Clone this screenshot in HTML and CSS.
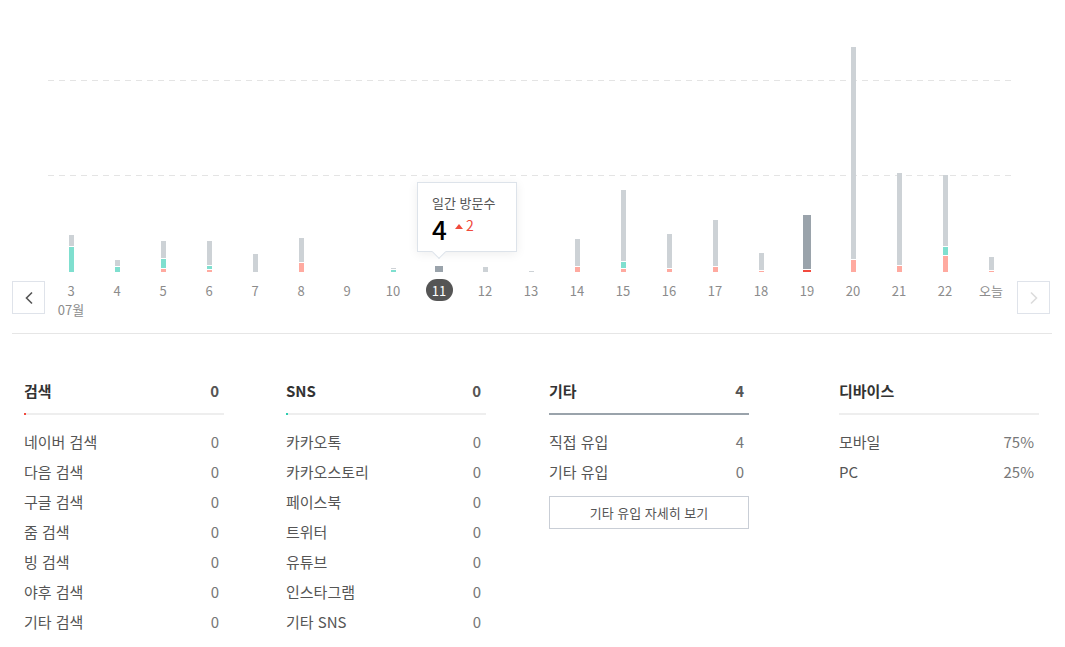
FILE: index.html
```html
<!DOCTYPE html>
<html lang="ko">
<head>
  <meta charset="UTF-8">
  <title>방문 통계</title>
  <link rel="stylesheet" href="styles.css">
</head>
<body>
  <div class="trend">
    <button class="nav-btn" type="button" aria-label="이전">
      <svg width="10" height="14" viewBox="0 0 10 14"><path d="M8 1.5 2.5 7 8 12.5" fill="none" stroke="#555" stroke-width="1.6"/></svg>
    </button>

    <div class="trend-main">
      <div class="plot">
        <div class="day"><div class="bar"><div class="seg etc" style="height:11px"></div><div class="seg sns" style="height:25px"></div></div></div>
        <div class="day"><div class="bar"><div class="seg etc" style="height:6px"></div><div class="seg sns" style="height:5px"></div></div></div>
        <div class="day"><div class="bar"><div class="seg etc" style="height:17px"></div><div class="seg sns" style="height:9px"></div><div class="seg search" style="height:3px"></div></div></div>
        <div class="day"><div class="bar"><div class="seg etc" style="height:24px"></div><div class="seg sns" style="height:3px"></div><div class="seg search" style="height:2px"></div></div></div>
        <div class="day"><div class="bar"><div class="seg etc" style="height:18px"></div></div></div>
        <div class="day"><div class="bar"><div class="seg etc" style="height:24px"></div><div class="seg search" style="height:9px"></div></div></div>
        <div class="day"><div class="bar"></div></div>
        <div class="day"><div class="bar"><div class="seg etc" style="height:1px"></div><div class="seg sns" style="height:2px"></div></div></div>
        <div class="day"><div class="bar hl"><div class="seg etc" style="height:6px"></div></div></div>
        <div class="day"><div class="bar"><div class="seg etc" style="height:5px"></div></div></div>
        <div class="day"><div class="bar"><div class="seg etc" style="height:1px"></div></div></div>
        <div class="day"><div class="bar"><div class="seg etc" style="height:27px"></div><div class="seg search" style="height:5px"></div></div></div>
        <div class="day"><div class="bar"><div class="seg etc" style="height:71px"></div><div class="seg sns" style="height:6px"></div><div class="seg search" style="height:3px"></div></div></div>
        <div class="day"><div class="bar"><div class="seg etc" style="height:34px"></div><div class="seg search" style="height:3px"></div></div></div>
        <div class="day"><div class="bar"><div class="seg etc" style="height:46px"></div><div class="seg search" style="height:5px"></div></div></div>
        <div class="day"><div class="bar"><div class="seg etc" style="height:17px"></div><div class="seg search" style="height:1px"></div></div></div>
        <div class="day"><div class="bar hl"><div class="seg etc" style="height:54px"></div><div class="seg search" style="height:2px"></div></div></div>
        <div class="day"><div class="bar"><div class="seg etc" style="height:212px"></div><div class="seg search" style="height:12px"></div></div></div>
        <div class="day"><div class="bar"><div class="seg etc" style="height:92px"></div><div class="seg search" style="height:6px"></div></div></div>
        <div class="day"><div class="bar"><div class="seg etc" style="height:71px"></div><div class="seg sns" style="height:8px"></div><div class="seg search" style="height:16px"></div></div></div>
        <div class="day"><div class="bar"><div class="seg etc" style="height:13px"></div><div class="seg search" style="height:1px"></div></div></div>

        <div class="tooltip">
          <div class="tooltip-title">일간 방문수</div>
          <div class="tooltip-value">4 <span class="up">2</span></div>
        </div>
      </div>

      <div class="axis">
        <span>3</span><span>4</span><span>5</span><span>6</span><span>7</span><span>8</span><span>9</span>
        <span>10</span><span class="current">11</span><span>12</span><span>13</span><span>14</span><span>15</span>
        <span>16</span><span>17</span><span>18</span><span>19</span><span>20</span><span>21</span><span>22</span><span>오늘</span>
      </div>
      <div class="month">07월</div>
    </div>

    <button class="nav-btn" type="button" aria-label="다음" disabled>
      <svg width="10" height="14" viewBox="0 0 10 14"><path d="M2 1.5 7.5 7 2 12.5" fill="none" stroke="#dcdcdc" stroke-width="1.6"/></svg>
    </button>
  </div>

  <div class="stats">
    <div class="stat-col">
      <div class="stat-head"><span>검색</span><span>0</span></div>
      <div class="meter"><div class="meter-fill search" style="width:2px"></div></div>
      <ul class="stat-list">
        <li><span>네이버 검색</span><span>0</span></li>
        <li><span>다음 검색</span><span>0</span></li>
        <li><span>구글 검색</span><span>0</span></li>
        <li><span>줌 검색</span><span>0</span></li>
        <li><span>빙 검색</span><span>0</span></li>
        <li><span>야후 검색</span><span>0</span></li>
        <li><span>기타 검색</span><span>0</span></li>
      </ul>
    </div>

    <div class="stat-col">
      <div class="stat-head"><span>SNS</span><span>0</span></div>
      <div class="meter"><div class="meter-fill sns" style="width:2px"></div></div>
      <ul class="stat-list">
        <li><span>카카오톡</span><span>0</span></li>
        <li><span>카카오스토리</span><span>0</span></li>
        <li><span>페이스북</span><span>0</span></li>
        <li><span>트위터</span><span>0</span></li>
        <li><span>유튜브</span><span>0</span></li>
        <li><span>인스타그램</span><span>0</span></li>
        <li><span>기타 SNS</span><span>0</span></li>
      </ul>
    </div>

    <div class="stat-col">
      <div class="stat-head"><span>기타</span><span>4</span></div>
      <div class="meter"><div class="meter-fill etc" style="width:100%"></div></div>
      <ul class="stat-list">
        <li><span>직접 유입</span><span>4</span></li>
        <li><span>기타 유입</span><span>0</span></li>
      </ul>
      <button class="more-btn" type="button">기타 유입 자세히 보기</button>
    </div>

    <div class="stat-col">
      <div class="stat-head"><span>디바이스</span></div>
      <div class="meter"></div>
      <ul class="stat-list">
        <li><span>모바일</span><span>75%</span></li>
        <li><span>PC</span><span>25%</span></li>
      </ul>
    </div>
  </div>
</body>
</html>
```

FILE: styles.css
```css
body {
  margin: 0;
  font-family: "Noto Sans CJK KR", "Noto Sans", sans-serif;
  color: #555;
  background-color: #ffffff;
}
.trend {
  display: flex;
  align-items: flex-end;
  margin: 0 13px 0 12px;
  padding-bottom: 14px;
  border-bottom: 1px solid #e6e6e6;
}
.nav-btn {
  width: 33px;
  height: 33px;
  margin-bottom: 5px;
  padding: 0;
  display: flex;
  align-items: center;
  justify-content: center;
  background-color: #ffffff;
  border: 1px solid #dfe3ea;
  cursor: pointer;
}
.nav-btn:disabled {
  cursor: default;
}
.trend-main {
  width: 966px;
  margin: 0 3px;
}
.plot {
  position: relative;
  height: 272px;
  display: flex;
  background-image:
    repeating-linear-gradient(to right, #e4e4e4 0 6px, transparent 6px 11px),
    repeating-linear-gradient(to right, #e4e4e4 0 6px, transparent 6px 11px);
  background-size: 964px 1px, 964px 1px;
  background-position: 0 80px, 0 175px;
  background-repeat: no-repeat;
}
.day {
  width: 46px;
  display: flex;
  align-items: flex-end;
  justify-content: center;
}
.bar {
  width: 5px;
  display: flex;
  flex-direction: column;
  gap: 1px;
}
.bar.hl {
  width: 8px;
}
.seg.etc {
  background-color: #cdd2d6;
}
.seg.sns {
  background-color: #7fdfcf;
}
.seg.search {
  background-color: #ffaaa0;
}
.bar.hl .seg.etc {
  background-color: #9aa3ab;
}
.bar.hl .seg.search {
  background-color: #f24a3e;
}
.tooltip {
  position: absolute;
  left: 369px;
  top: 182px;
  width: 100px;
  height: 70px;
  padding: 11px 0 0 14px;
  box-sizing: border-box;
  background-color: #ffffff;
  border: 1px solid #dde3ea;
  box-shadow: 0 2px 10px rgba(0, 0, 0, 0.07);
}
.tooltip::after {
  content: "";
  position: absolute;
  left: 16px;
  bottom: -6px;
  width: 9px;
  height: 9px;
  background-color: #ffffff;
  border-right: 1px solid #dde3ea;
  border-bottom: 1px solid #dde3ea;
  transform: rotate(45deg);
}
.tooltip-title {
  font-size: 13px;
  line-height: 18px;
  color: #555;
}
.tooltip-value {
  margin-top: 2px;
  font-size: 26px;
  line-height: 30px;
  font-weight: 500;
  color: #000;
}
.up {
  position: relative;
  top: -9px;
  margin-left: 1px;
  font-size: 14px;
  font-weight: 400;
  color: #f04b3c;
}
.up::before {
  content: "";
  display: inline-block;
  margin-right: 3px;
  vertical-align: 2px;
  border-left: 4px solid transparent;
  border-right: 4px solid transparent;
  border-bottom: 5px solid #f04b3c;
}
.axis {
  display: flex;
  margin-top: 7px;
}
.axis span {
  width: 46px;
  height: 22px;
  display: flex;
  align-items: center;
  justify-content: center;
  font-size: 13px;
  color: #8c8c8c;
}
.axis .current {
  position: relative;
  color: #ffffff;
  z-index: 0;
}
.axis .current::after {
  content: "";
  position: absolute;
  left: 10px;
  top: 0;
  width: 27px;
  height: 22px;
  border-radius: 11px;
  background-color: #555555;
  z-index: -1;
}
.month {
  width: 46px;
  text-align: center;
  font-size: 13px;
  line-height: 18px;
  color: #8c8c8c;
}
.stats {
  display: grid;
  grid-template-columns: 262px 263px 290px 200px;
  padding: 46px 0 0 24px;
}
.stat-col {
  width: 200px;
}
.stat-head {
  display: flex;
  justify-content: space-between;
  padding: 0 5px 11px 0;
  font-size: 15px;
  line-height: 22px;
  font-weight: 700;
  color: #333;
}
.stat-head span + span {
  color: #555;
}
.meter {
  height: 2px;
  background-color: #eeeeee;
}
.meter-fill {
  height: 100%;
}
.meter-fill.search {
  background-color: #f24a3e;
}
.meter-fill.sns {
  background-color: #2ccdb0;
}
.meter-fill.etc {
  background-color: #9aa3ab;
}
.stat-list {
  list-style: none;
  margin: 12px 0 0;
  padding: 0;
}
.stat-list li {
  display: flex;
  justify-content: space-between;
  padding-right: 5px;
  font-size: 15px;
  line-height: 30px;
  color: #555;
}
.stat-list li span + span {
  color: #777;
}
.more-btn {
  width: 200px;
  height: 33px;
  margin-top: 9px;
  font-family: inherit;
  font-size: 13px;
  color: #555;
  background-color: #ffffff;
  border: 1px solid #c9ced6;
  cursor: pointer;
}
```
